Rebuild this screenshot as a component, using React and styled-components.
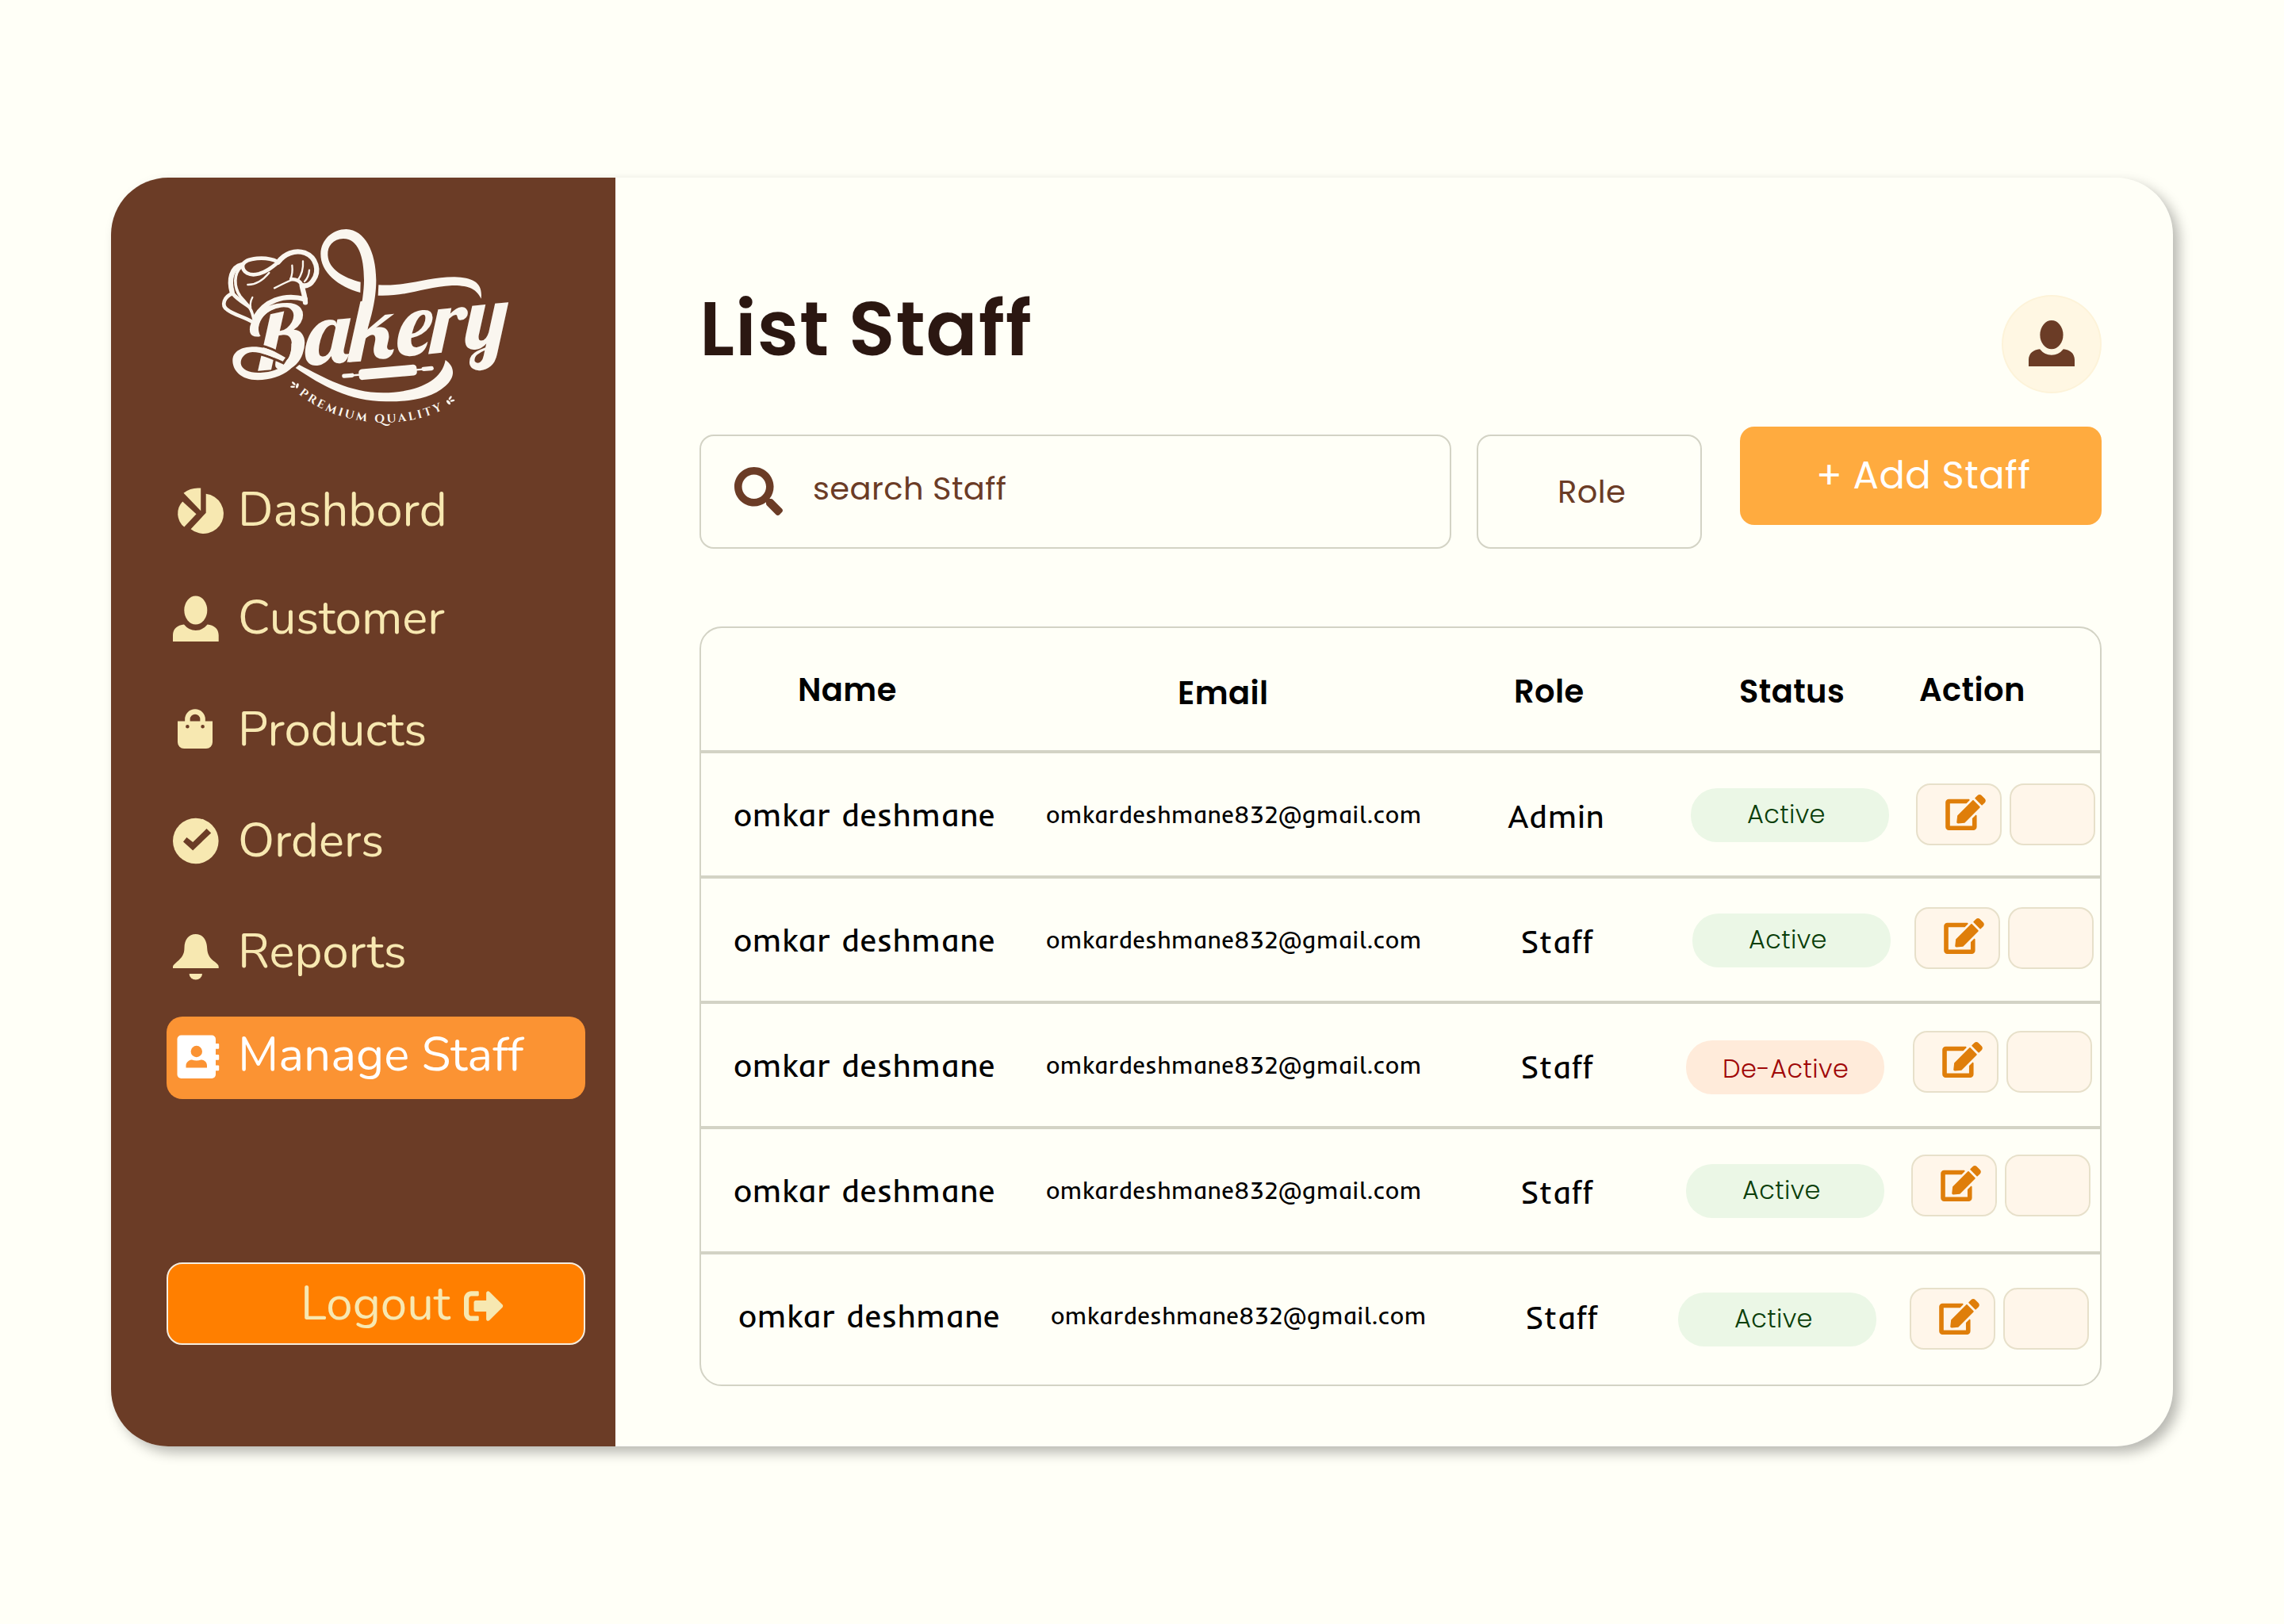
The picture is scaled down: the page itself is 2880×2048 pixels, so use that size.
import React from "react";
import styled, { createGlobalStyle, css } from "styled-components";
import { FaEdit, FaSearch, FaSignOutAlt } from "react-icons/fa";

const color = {
  page: "#fffff7",
  brown: "#6b3c26",
  cream: "#f7e8b1",
  title: "#2b1711",
  line: "#d3d3c5",
  logo: "#faf6ef",
};

const heading = `"Poppins", "Inter", sans-serif`;
const menu = `"Nunito", "Lato", sans-serif`;
const body = `"Inder", "Open Sans", sans-serif`;

const GlobalStyle = createGlobalStyle`
  *, *::before, *::after { box-sizing: border-box; }
  body { margin: 0; background: ${color.page}; }
  button { font: inherit; margin: 0; cursor: pointer; }
  svg { display: block; flex: none; }
`;

const Page = styled.div`
  width: 2880px;
  height: 2048px;
  padding: 224px 140px;
  background: ${color.page};
`;

const Card = styled.div`
  display: flex;
  width: 2600px;
  height: 1600px;
  border-radius: 72px;
  overflow: hidden;
  background: ${color.page};
  box-shadow: 8px 8px 16px rgba(0, 0, 0, 0.28);
`;

/* ---------- sidebar ---------- */

const Sidebar = styled.aside`
  display: flex;
  flex-direction: column;
  width: 636px;
  flex: none;
  padding: 46px 38px 128px 70px;
  background: ${color.brown};
`;

const LogoSlot = styled.div`
  padding-left: 50px;
  height: 325px;
`;

const Nav = styled.nav`
  display: flex;
  flex-direction: column;
`;

const NavItem = styled.a`
  display: flex;
  align-items: center;
  height: 104px;
  margin-bottom: ${(p) => p.$after}px;
  border-radius: 20px;
  color: ${(p) => (p.$active ? "#ffffff" : color.cream)};
  background: ${(p) => (p.$active ? "#fb9333" : "transparent")};
`;

const NavLabel = styled.span`
  margin-bottom: 9px;
  font-family: ${menu};
  font-size: 60px;
  line-height: 72px;
  white-space: nowrap;
`;

const Logout = styled.button`
  display: flex;
  align-items: center;
  height: 104px;
  margin-top: auto;
  padding: 0 0 0 167px;
  border: 2px solid #f5ede0;
  border-radius: 20px;
  background: #ff7f00;
  color: ${color.cream};
`;

const LogoutLabel = styled(NavLabel)`
  margin: 0;
`;

const LogoutIcon = styled(FaSignOutAlt)`
  margin: 6px 0 0 17px;
`;

/* ---------- main ---------- */

const Main = styled.main`
  flex: 1;
  padding: 134px 90px 76px 106px;
  display: flex;
  flex-direction: column;
`;

const Header = styled.header`
  display: flex;
  justify-content: space-between;
  align-items: flex-start;
  height: 180px;
`;

const Title = styled.h1`
  margin: 0;
  font: 600 96px/114px ${heading};
  letter-spacing: 0.01em;
  color: ${color.title};
`;

const Avatar = styled.div`
  display: flex;
  align-items: center;
  justify-content: center;
  width: 126px;
  height: 124px;
  margin-top: 14px;
  padding-bottom: 2px;
  border: 2px solid #fdf3d9;
  border-radius: 50%;
  background: #fff7e3;
  color: ${color.brown};
`;

const Toolbar = styled.div`
  display: flex;
  align-items: flex-start;
  height: 154px;
`;

const outlined = css`
  display: flex;
  align-items: center;
  height: 144px;
  margin-top: 10px;
  border: 2px solid ${color.line};
  border-radius: 18px;
  background: transparent;
  color: ${color.brown};
  font: 400 40px/60px ${heading};
  letter-spacing: 0.01em;
`;

const SearchBox = styled.div`
  ${outlined}
  width: 948px;
  padding-left: 42px;
  gap: 38px;
`;

const SearchIcon = styled(FaSearch)`
  margin-bottom: 2px;
`;

const SearchHint = styled.span`
  margin-bottom: 9px;
`;

const RoleFilter = styled.button`
  ${outlined}
  && {
    font: 400 40px/60px ${heading};
    margin: 10px 0 0 32px;
  }
  width: 284px;
  padding: 0 0 0 100px;
`;

const AddButton = styled.button`
  width: 456px;
  height: 124px;
  padding: 0 0 0 96px;
  border: 0;
  border-radius: 18px;
  background: #ffab3f;
  color: #ffffff;
  text-align: left;
  letter-spacing: 0.01em;
  && {
    margin-left: 48px;
    font: 400 48px/122px ${heading};
  }
`;

/* ---------- table ---------- */

const Table = styled.section`
  margin-top: 98px;
  width: 1768px;
  border: 2px solid ${color.line};
  border-radius: 28px;
  overflow: hidden;
`;

const columns = css`
  display: grid;
  grid-template-columns: 416px 560px 240px 300px 248px;
  align-items: start;
`;

const HeadRow = styled.div`
  ${columns}
  height: 154px;
`;

const Row = styled.div`
  ${columns}
  height: ${(p) => (p.$last ? 168 : 158)}px;
  border-top: 4px solid ${color.line};
`;

const Cell = styled.div`
  padding: ${(p) => p.$top}px 0 0 ${(p) => p.$left}px;
  white-space: nowrap;
`;

const HeadCell = styled(Cell)`
  font: 600 40px/60px ${heading};
  letter-spacing: 0.01em;
  color: #000;
`;

const TextCell = styled(Cell)`
  font: 400 40px/60px ${body};
  letter-spacing: 0.011em;
  color: #000;
`;

const EmailCell = styled(TextCell)`
  font-size: 30px;
`;

const Pill = styled.div`
  width: 250px;
  height: 68px;
  border-radius: 33px;
  font: 300 32px / ${(p) => (p.$off ? 72 : 65)}px ${heading};
  padding-left: ${(p) => (p.$off ? 46 : 71)}px;
  letter-spacing: 0.012em;
  color: ${(p) => (p.$off ? "#a00808" : "#0b3f0b")};
  background: ${(p) => (p.$off ? "#ffebda" : "#ebf7e6")};
`;

const Actions = styled(Cell)`
  display: flex;
  gap: 10px;
`;

const ActionButton = styled.button`
  width: 108px;
  height: 78px;
  padding: 0 0 6px 35px;
  border: 2px solid #e7e0ca;
  border-radius: 18px;
  background: #fff6ea;
  color: #df7e0a;
`;

const EditIcon = styled(FaEdit)`
  width: 51px;
  height: 45px;
`;

/* ---------- drawings ---------- */

const NavGlyph = ({ children }) => (
  <svg width="90" height="104" viewBox="0 0 90 104" fill="currentColor">
    {children}
  </svg>
);

const PieIcon = () => (
  <NavGlyph>
    <path d="M43.2 20.6V49.2L21.5 26.7A30 30 0 0 1 43.2 20.6Z" />
    <path d="M20.2 37.5L37.5 53.3L22.3 69.6A21.8 21.8 0 0 1 20.2 37.5Z" />
    <path d="M49.7 27.8A25.2 25.2 0 1 1 30.6 72.2L49.7 51.7Z" />
  </NavGlyph>
);

const personShape = (
  <>
    <ellipse cx="36.8" cy="38.5" rx="14.5" ry="18" />
    <path d="M8 78V70C8 62 14 57 22 56.5Q28 64 36.8 64Q45.5 64 51.6 56.5C59.6 57 65.7 62 65.7 70V78Z" />
  </>
);

const PersonIcon = () => <NavGlyph>{personShape}</NavGlyph>;

const AvatarIcon = () => (
  <svg width="58" height="58" viewBox="8 20.5 57.7 57.5" fill="currentColor">
    {personShape}
  </svg>
);

const BagIcon = () => (
  <NavGlyph>
    <path
      fillRule="evenodd"
      d="M14 37.5H58V64a8 8 0 0 1-8 8H22a8 8 0 0 1-8-8ZM28.7 44.3a2.3 2.3 0 1 0-4.6 0a2.3 2.3 0 1 0 4.6 0ZM47.9 44.3a2.3 2.3 0 1 0-4.6 0a2.3 2.3 0 1 0 4.6 0Z"
    />
    <path d="M26.4 39V35a9.6 9.6 0 0 1 19.2 0V39" fill="none" stroke="currentColor" strokeWidth="6.5" />
  </NavGlyph>
);

const CheckIcon = () => (
  <NavGlyph>
    <circle cx="36.8" cy="48.5" r="28.8" />
    <path d="M21 49.4L25.4 44L33.2 50L50.5 33L56.2 38.5L33.2 60.4Z" fill={color.brown} />
  </NavGlyph>
);

const BellIcon = () => (
  <NavGlyph>
    <path d="M8 69V67C8 65 10 64 13 61C19 56 22.5 52 22.5 43C22.5 33 28 26 36.8 26C46 26 51 34 51.2 44C51.5 52 55 57 61 61C64 63.5 65.7 65 65.7 67V69Z" />
    <path d="M28.6 76H45a8.2 7.5 0 0 1-16.4 0Z" />
  </NavGlyph>
);

const BookIcon = () => (
  <NavGlyph>
    <rect x="13.5" y="23.5" width="48.5" height="54.5" rx="5" />
    <rect x="58" y="34" width="8.2" height="6.8" rx="1" />
    <rect x="58" y="48" width="8.2" height="6.8" rx="1" />
    <rect x="58" y="61.5" width="8.2" height="6.8" rx="1" />
    <circle cx="37.8" cy="44" r="7.2" fill="#fb9333" />
    <path d="M24.5 64.5V62C24.5 57 29 54.5 32 54.5Q38 56.5 43.5 54.5C47 54.5 51 57 51 62V64.5Z" fill="#fb9333" />
  </NavGlyph>
);

const Leaf = ({ x, y, turn }) => (
  <g transform={`translate(${x} ${y}) rotate(${turn})`}>
    <ellipse cx="-9" cy="-5" rx="9" ry="4" transform="rotate(20 -9 -5)" />
    <ellipse cx="-7" cy="8" rx="9" ry="4" transform="rotate(-25 -7 8)" />
    <ellipse cx="7" cy="-3" rx="5" ry="10" transform="rotate(-10 7 -3)" />
  </g>
);

const BakeryLogo = () => (
  <svg width="400" height="280" viewBox="0 0 1200 840" fill={color.logo}>
    {/* chef hat */}
    <g fill="none" stroke={color.logo} strokeLinecap="round" strokeLinejoin="round">
      <g strokeWidth="19">
        <path d="M272 182C295 150 335 134 372 146C418 164 430 215 405 250C395 266 380 273 366 271" />
        <path d="M98 295C85 250 95 200 135 192" />
        <path d="M185 392C220 330 290 300 374 322" />
        <path d="M362 270C366 292 374 310 375 334" />
      </g>
      <g strokeWidth="14">
        <path d="M270 180C225 158 150 165 138 192C136 222 165 235 200 226C235 216 255 196 280 176" />
        <path d="M132 200C104 225 104 275 128 310C148 335 168 350 174 375L182 405" strokeWidth="11" />
        <path d="M100 300C68 312 55 345 80 362C105 382 145 388 182 412" />
        <path d="M100 300C115 320 140 335 165 352" />
        <path d="M322 246C345 246 358 256 364 272" />
      </g>
      <g strokeWidth="7">
        <path d="M345 252C362 230 368 205 366 178" />
        <path d="M318 248C327 228 327 210 325 194" />
        <path d="M372 255C384 243 389 228 390 212" />
        <path d="M258 280C285 268 305 254 330 248" />
        <path d="M157 267C190 268 215 250 238 222" />
        <path d="M175 315C165 332 165 348 170 368" />
      </g>
    </g>
    {/* ribbons */}
    <path d="M206 462C165 462 165 425 180 400C205 345 280 322 340 348C280 336 205 372 198 424C197 442 200 452 206 462Z" />
    <path d="M583 297C500 275 432 220 433 150C434 95 480 57 530 57C600 60 642 140 643 250C643 330 620 400 612 430L585 557L540 560C565 460 597 330 597 250C597 160 575 92 518 93C480 95 458 120 460 155C463 210 520 240 584 257Z" />
    <path d="M652 268C760 275 840 237 940 238C1010 240 1047 260 1040 320C1020 278 985 270 930 270C830 275 760 312 650 308Z" />
    <path d="M352 570C450 620 540 675 670 676C780 675 890 640 905 552C945 580 940 620 905 650C850 700 760 710 680 709C540 708 440 650 338 582Z" />
    {/* word mark */}
    <g transform="translate(190 594) skewY(-5.7) scale(1.06 1)">
      <text
        x="-28 178 336 508 626 748"
        y="0"
        fontFamily="'Lobster', 'Liberation Serif', serif"
        fontSize="330"
      >
        Bakery
      </text>
    </g>
    <path d="M200 496C245 505 275 522 306 541L292 564C260 548 230 536 205 530" fill="none" stroke={color.brown} strokeWidth="9" />
    <path d="M366 490C365 570 290 628 195 628C130 628 98 590 100 550C104 510 150 500 190 502C235 505 270 525 300 543L290 557C250 540 210 522 175 522C145 524 130 545 131 565C134 590 165 602 205 600C290 598 325 550 322 490Z" />
    {/* rolling pin */}
    <g transform="rotate(-5 687 598)">
      <rect x="577" y="578" width="220" height="41" rx="13" />
      <rect x="520" y="595" width="340" height="7" rx="3" />
      <rect x="513" y="590" width="46" height="16" rx="8" />
      <rect x="815" y="590" width="46" height="16" rx="8" />
    </g>
    <path id="tagline-arc" d="M350 680C480 790 720 830 908 734" fill="none" />
    <text fontFamily="'Cinzel', 'Liberation Serif', serif" fontSize="44" fontWeight="600">
      <textPath href="#tagline-arc" textLength="575" lengthAdjust="spacing">
        PREMIUM QUALITY
      </textPath>
    </text>
    <Leaf x={337} y={649} turn={25} />
    <Leaf x={921} y={706} turn={150} />
  </svg>
);

/* ---------- data ---------- */

const navItems = [
  { label: "Dashbord", Icon: PieIcon, after: 32 },
  { label: "Customer", Icon: PersonIcon, after: 37 },
  { label: "Products", Icon: BagIcon, after: 36 },
  { label: "Orders", Icon: CheckIcon, after: 36 },
  { label: "Reports", Icon: BellIcon, after: 26 },
  { label: "Manage Staff", Icon: BookIcon, after: 0, active: true },
];

const headCells = [
  { label: "Name", top: 48, left: 122 },
  { label: "Email", top: 52, left: 185 },
  { label: "Role", top: 50, left: 49 },
  { label: "Status", top: 50, left: 93 },
  { label: "Action", top: 48, left: 20 },
];

const name = "omkar deshmane";
const email = "omkardeshmane832@gmail.com";

const staff = [
  { role: "Admin", roleLeft: 41, shift: 0, pill: [44, 32], act: [38, 16] },
  { role: "Staff", roleLeft: 57, shift: 0, pill: [44, 34], act: [36, 14] },
  { role: "Staff", roleLeft: 57, shift: 0, pill: [46, 26], act: [34, 12], off: true },
  { role: "Staff", roleLeft: 57, shift: 0, pill: [44, 26], act: [32, 10] },
  { role: "Staff", roleLeft: 57, shift: 6, pill: [48, 16], act: [42, 8] },
];

export default function App() {
  return (
    <Page>
      <GlobalStyle />
      <Card>
        <Sidebar>
          <LogoSlot>
            <BakeryLogo />
          </LogoSlot>
          <Nav>
            {navItems.map(({ label, Icon, after, active }) => (
              <NavItem key={label} $after={after} $active={active}>
                <Icon />
                <NavLabel>{label}</NavLabel>
              </NavItem>
            ))}
          </Nav>
          <Logout>
            <LogoutLabel>Logout</LogoutLabel>
            <LogoutIcon size={50} />
          </Logout>
        </Sidebar>
        <Main>
          <Header>
            <Title>List Staff</Title>
            <Avatar>
              <AvatarIcon />
            </Avatar>
          </Header>
          <Toolbar>
            <SearchBox>
              <SearchIcon size={61} />
              <SearchHint>search Staff</SearchHint>
            </SearchBox>
            <RoleFilter>Role</RoleFilter>
            <AddButton>+ Add Staff</AddButton>
          </Toolbar>
          <Table>
            <HeadRow>
              {headCells.map((c) => (
                <HeadCell key={c.label} $top={c.top} $left={c.left}>
                  {c.label}
                </HeadCell>
              ))}
            </HeadRow>
            {staff.map((s, i) => (
              <Row key={i} $last={i === staff.length - 1}>
                <TextCell $top={47} $left={41 + s.shift}>{name}</TextCell>
                <EmailCell $top={47} $left={19 + s.shift}>{email}</EmailCell>
                <TextCell $top={49} $left={s.roleLeft + s.shift}>{s.role}</TextCell>
                <Cell $top={s.pill[0]} $left={s.pill[1]}>
                  <Pill $off={s.off}>{s.off ? "De-Active" : "Active"}</Pill>
                </Cell>
                <Actions $top={s.act[0]} $left={s.act[1]}>
                  <ActionButton aria-label="Edit">
                    <EditIcon />
                  </ActionButton>
                  <ActionButton aria-label="Delete" />
                </Actions>
              </Row>
            ))}
          </Table>
        </Main>
      </Card>
    </Page>
  );
}
